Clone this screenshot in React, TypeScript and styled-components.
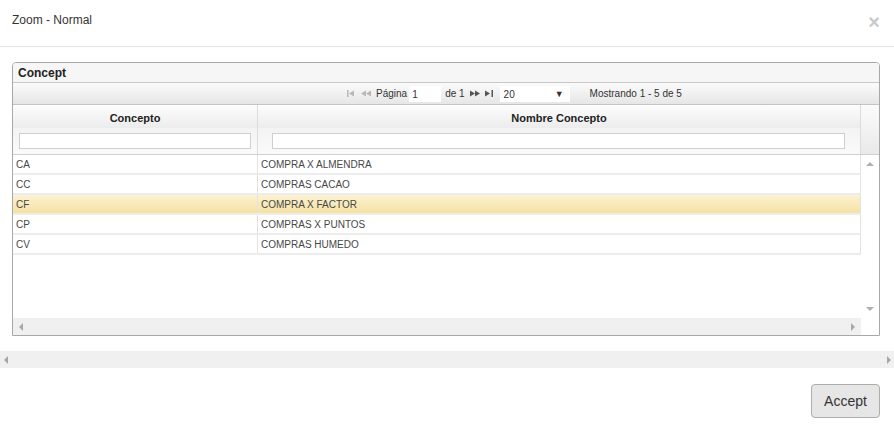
import styled, { createGlobalStyle } from "styled-components";

const GlobalStyle = createGlobalStyle`
  html, body {
    margin: 0;
    padding: 0;
    background: #fff;
  }
  body {
    font-family: "Liberation Sans", Arial, sans-serif;
    color: #333;
  }
`;

const Modal = styled.div`
  width: 894px;
  height: 429px;
  display: flex;
  flex-direction: column;
  background: #fff;
  overflow: hidden;
`;

const Header = styled.div`
  height: 47px;
  flex: none;
  box-sizing: border-box;
  padding: 0 12px 7px 12px;
  display: flex;
  align-items: center;
  justify-content: space-between;
  border-bottom: 1px solid #e5e5e5;
`;

const Title = styled.span`
  font-size: 12px;
  color: #333;
`;

const Close = styled.span`
  font-size: 20px;
  font-weight: bold;
  color: #cacaca;
  margin-right: 2px;
  margin-top: 5px;
`;

const Body = styled.div`
  padding: 15px 14px 0 12px;
`;

const Panel = styled.div`
  height: 274px;
  box-sizing: border-box;
  border: 1px solid #a8a8a8;
  border-radius: 4px 4px 0 0;
  display: flex;
  flex-direction: column;
  overflow: hidden;
`;

const Caption = styled.div`
  height: 20px;
  flex: none;
  box-sizing: border-box;
  padding-left: 5px;
  display: flex;
  align-items: center;
  font-size: 12px;
  font-weight: bold;
  color: #222;
  background: #f6f6f6;
  border-bottom: 1px solid #c8c8c8;
`;

const Pager = styled.div`
  height: 22px;
  flex: none;
  box-sizing: border-box;
  display: flex;
  align-items: center;
  padding-left: 334px;
  font-size: 10px;
  color: #333;
  background: linear-gradient(#fbfbfb, #e6e6e6);
  border-bottom: 1px solid #c4c4c4;
`;

const PageButton = styled.span<{ $disabled?: boolean }>`
  display: inline-flex;
  align-items: center;
  margin-right: 4px;
  color: ${(p) => (p.$disabled ? "#b8b8b8" : "#555")};
`;

const PageInput = styled.span`
  display: inline-block;
  width: 32px;
  height: 16px;
  line-height: 17px;
  box-sizing: border-box;
  padding-left: 3px;
  background: #fff;
  margin: 0 4px 0 2px;
`;

const PageSelect = styled.span`
  display: inline-flex;
  align-items: center;
  justify-content: space-between;
  width: 70px;
  height: 16px;
  box-sizing: border-box;
  padding: 1px 6px 0 4px;
  background: #fff;
  margin-left: 1px;
  font-size: 10px;
`;

const Caret = styled.span`
  font-size: 9px;
  color: #333;
`;

const Recs = styled.span`
  margin-left: 20px;
`;

const HeadBlock = styled.div`
  flex: none;
  display: grid;
  grid-template-columns: 245px 603px 1fr;
  grid-template-rows: 23px 26px;
  border-bottom: 1px solid #cfcfcf;
`;

const HeadCell = styled.div`
  display: flex;
  align-items: center;
  justify-content: center;
  font-size: 11px;
  font-weight: bold;
  color: #222;
  border-right: 1px solid #dcdcdc;
  background: linear-gradient(#fdfdfd, #ececec);
  padding-top: 2px;
`;

const FilterCell = styled.div`
  display: flex;
  align-items: center;
  padding: 0 6px;
  border-right: 1px solid #dcdcdc;
  background: linear-gradient(#f3f3f3, #fafafa);
`;

const FilterInput = styled.div<{ $inset: number; $end: number }>`
  flex: 1;
  height: 16px;
  margin-left: ${(p) => p.$inset}px;
  margin-right: ${(p) => p.$end}px;
  box-sizing: border-box;
  border: 1px solid #cfcfcf;
  background: #fff;
`;

const EmptyHead = styled.div`
  grid-row: 1 / span 2;
  grid-column: 3;
  background: linear-gradient(#fbfbfb, #e9e9e9);
`;

const BodyArea = styled.div`
  flex: 1;
  display: grid;
  grid-template-columns: 1fr 18px;
  grid-template-rows: 1fr 17px;
  min-height: 0;
`;

const Rows = styled.div`
  display: flex;
  flex-direction: column;
`;

const Row = styled.div<{ $selected?: boolean }>`
  display: grid;
  grid-template-columns: 245px 1fr;
  height: 20px;
  box-sizing: border-box;
  border-bottom: 2px solid #ececec;
  background: ${(p) =>
    p.$selected ? "linear-gradient(#fcf2d2, #f5e1a2)" : "#fff"};
`;

const Cell = styled.div`
  display: flex;
  align-items: center;
  padding-left: 3px;
  font-size: 10px;
  color: #474747;
  border-right: 1px solid #e2e2e2;
`;

const VScroll = styled.div`
  background: #fff;
  display: flex;
  flex-direction: column;
  justify-content: space-between;
  align-items: center;
  padding: 7px 0 7px;
`;

const HScroll = styled.div`
  background: #f0f0f0;
  display: flex;
  justify-content: space-between;
  align-items: center;
  padding: 0 6px;
`;

const Corner = styled.div`
  background: #fff;
`;

const Arrow = styled.span<{ $dir: "up" | "down" | "left" | "right" }>`
  width: 0;
  height: 0;
  border-style: solid;
  ${(p) =>
    p.$dir === "up"
      ? "border-width: 0 4px 4px 4px; border-color: transparent transparent #b0b0b0 transparent;"
      : p.$dir === "down"
      ? "border-width: 4px 4px 0 4px; border-color: #b0b0b0 transparent transparent transparent;"
      : p.$dir === "left"
      ? "border-width: 4px 4px 4px 0; border-color: transparent #a8a8a8 transparent transparent;"
      : "border-width: 4px 0 4px 4px; border-color: transparent transparent transparent #a8a8a8;"}
`;

const OuterScroll = styled.div`
  margin-top: 15px;
  height: 17px;
  flex: none;
  background: #f0f0f0;
  display: flex;
  justify-content: space-between;
  align-items: center;
  padding: 0 3px 0 4px;
`;

const Footer = styled.div`
  display: flex;
  justify-content: flex-end;
  padding: 16px 14px 0 0;
`;

const Button = styled.button`
  width: 69px;
  height: 34px;
  font-family: "Liberation Sans", Arial, sans-serif;
  font-size: 14px;
  color: #333;
  background: #e6e6e6;
  border: 1px solid #adadad;
  border-radius: 4px;
  padding: 0;
`;

function FirstIcon() {
  return (
    <svg width="10" height="7" viewBox="0 0 10 7">
      <rect x="0" y="0" width="1.5" height="7" fill="currentColor" />
      <path d="M2 3.5 L7 0.5 V6.5 Z" fill="currentColor" />
    </svg>
  );
}

function PrevIcon() {
  return (
    <svg width="11" height="7" viewBox="0 0 11 7">
      <path d="M0 3.5 L5 0.5 V6.5 Z" fill="currentColor" />
      <path d="M5 3.5 L10 0.5 V6.5 Z" fill="currentColor" />
    </svg>
  );
}

function NextIcon() {
  return (
    <svg width="11" height="7" viewBox="0 0 11 7">
      <path d="M0 0.5 L5 3.5 L0 6.5 Z" fill="currentColor" />
      <path d="M5 0.5 L10 3.5 L5 6.5 Z" fill="currentColor" />
    </svg>
  );
}

function LastIcon() {
  return (
    <svg width="10" height="7" viewBox="0 0 10 7">
      <path d="M0 0.5 L5 3.5 L0 6.5 Z" fill="currentColor" />
      <rect x="6.5" y="0" width="1.5" height="7" fill="currentColor" />
    </svg>
  );
}

const rows = [
  { code: "CA", name: "COMPRA X ALMENDRA" },
  { code: "CC", name: "COMPRAS CACAO" },
  { code: "CF", name: "COMPRA X FACTOR" },
  { code: "CP", name: "COMPRAS X PUNTOS" },
  { code: "CV", name: "COMPRAS HUMEDO" },
];

export default function App() {
  return (
    <>
      <GlobalStyle />
      <Modal>
        <Header>
          <Title>Zoom - Normal</Title>
          <Close>×</Close>
        </Header>
        <Body>
          <Panel>
            <Caption>Concept</Caption>
            <Pager>
              <PageButton $disabled>
                <FirstIcon />
              </PageButton>
              <PageButton $disabled>
                <PrevIcon />
              </PageButton>
              <span>Página</span>
              <PageInput>1</PageInput>
              <span>de 1</span>
              <PageButton style={{ marginLeft: 5 }}>
                <NextIcon />
              </PageButton>
              <PageButton>
                <LastIcon />
              </PageButton>
              <PageSelect>
                20
                <Caret>▼</Caret>
              </PageSelect>
              <Recs>Mostrando 1 - 5 de 5</Recs>
            </Pager>
            <HeadBlock>
              <HeadCell>Concepto</HeadCell>
              <HeadCell>Nombre Concepto</HeadCell>
              <EmptyHead />
              <FilterCell>
                <FilterInput $inset={0} $end={0} />
              </FilterCell>
              <FilterCell>
                <FilterInput $inset={8} $end={9} />
              </FilterCell>
            </HeadBlock>
            <BodyArea>
              <Rows>
                {rows.map((r) => (
                  <Row key={r.code} $selected={r.code === "CF"}>
                    <Cell>{r.code}</Cell>
                    <Cell>{r.name}</Cell>
                  </Row>
                ))}
              </Rows>
              <VScroll>
                <Arrow $dir="up" />
                <Arrow $dir="down" />
              </VScroll>
              <HScroll>
                <Arrow $dir="left" />
                <Arrow $dir="right" />
              </HScroll>
              <Corner />
            </BodyArea>
          </Panel>
        </Body>
        <OuterScroll>
          <Arrow $dir="left" />
          <Arrow $dir="right" />
        </OuterScroll>
        <Footer>
          <Button>Accept</Button>
        </Footer>
      </Modal>
    </>
  );
}
